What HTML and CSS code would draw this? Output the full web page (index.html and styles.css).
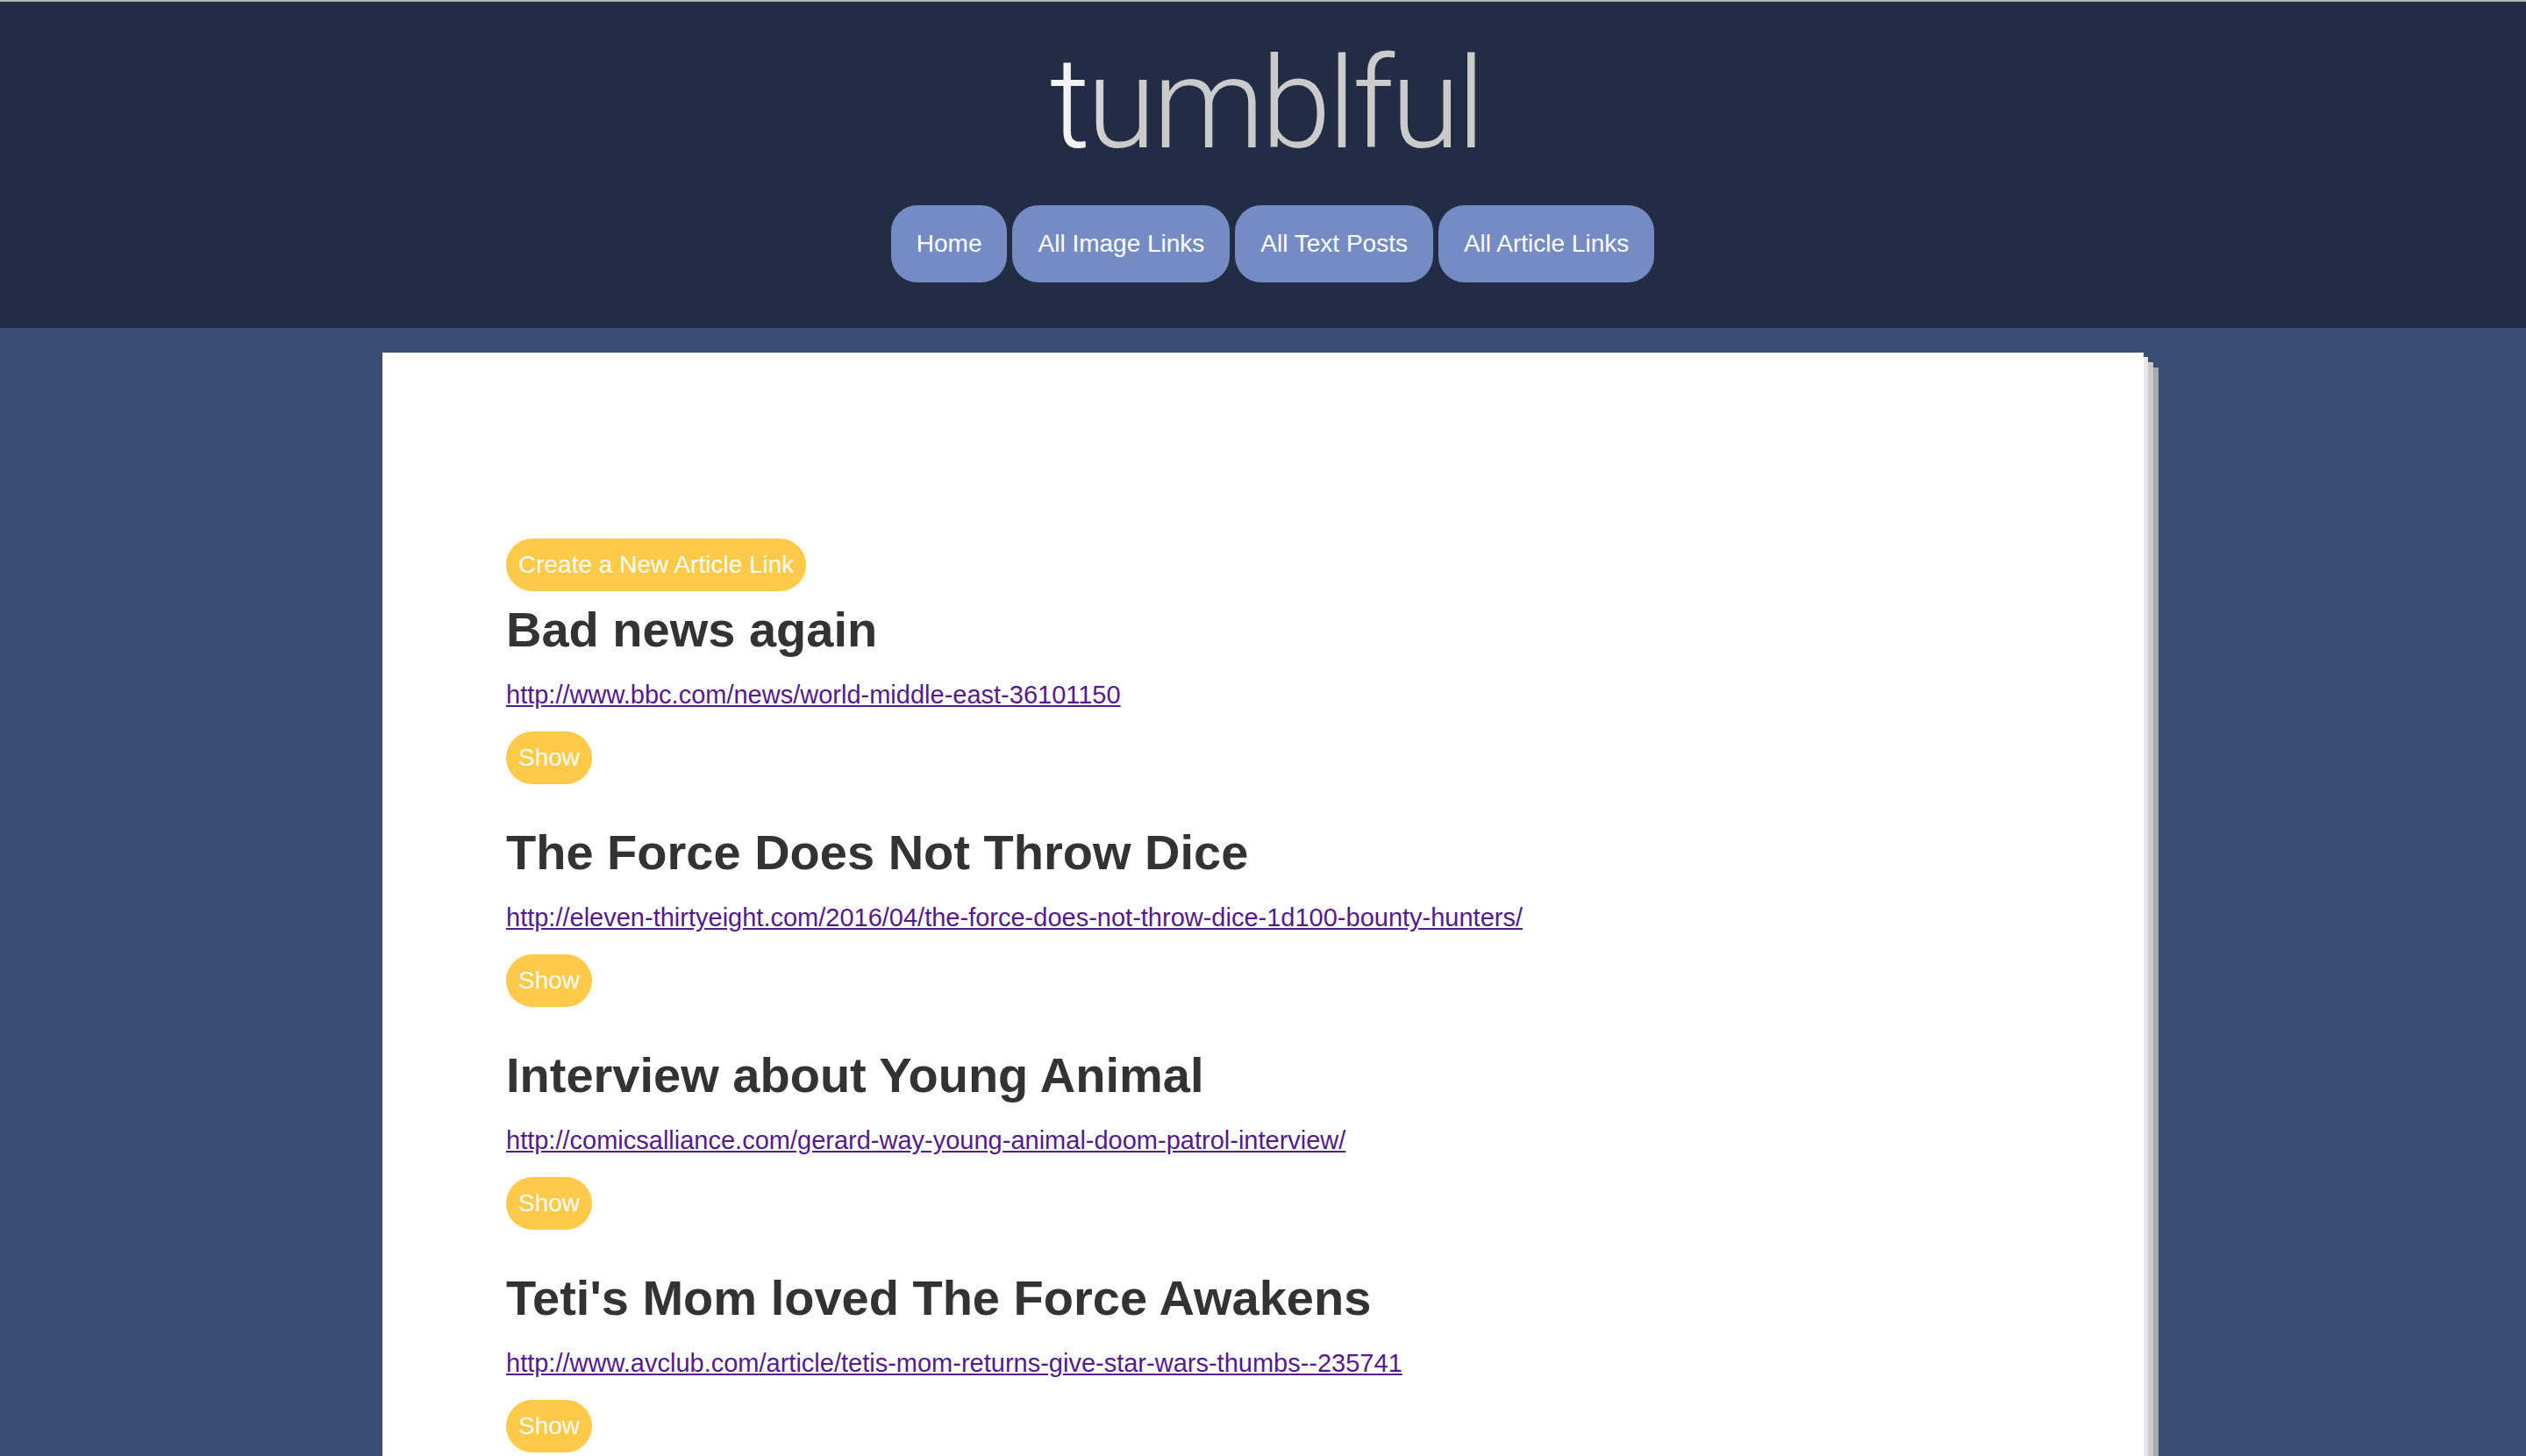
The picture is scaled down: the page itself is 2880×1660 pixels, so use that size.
FILE: index.html
```html
<!DOCTYPE html>
<html lang="en">
<head>
<meta charset="utf-8">
<title>tumblful</title>
<link rel="stylesheet" href="styles.css">
</head>
<body>
<header class="site-header">
  <h1 class="logo">tumblful</h1>
  <nav class="nav">
    <a class="nav-btn" href="#">Home</a>
    <a class="nav-btn" href="#">All Image Links</a>
    <a class="nav-btn" href="#">All Text Posts</a>
    <a class="nav-btn" href="#">All Article Links</a>
  </nav>
</header>
<main class="page">
  <section class="card">
    <a class="pill" href="#">Create a New Article Link</a>
    <article class="item">
      <h2 class="item-title">Bad news again</h2>
      <p class="item-link"><a href="#">http://www.bbc.com/news/world-middle-east-36101150</a></p>
      <a class="pill" href="#">Show</a>
    </article>
    <article class="item">
      <h2 class="item-title">The Force Does Not Throw Dice</h2>
      <p class="item-link"><a href="#">http://eleven-thirtyeight.com/2016/04/the-force-does-not-throw-dice-1d100-bounty-hunters/</a></p>
      <a class="pill" href="#">Show</a>
    </article>
    <article class="item">
      <h2 class="item-title">Interview about Young Animal</h2>
      <p class="item-link"><a href="#">http://comicsalliance.com/gerard-way-young-animal-doom-patrol-interview/</a></p>
      <a class="pill" href="#">Show</a>
    </article>
    <article class="item">
      <h2 class="item-title">Teti's Mom loved The Force Awakens</h2>
      <p class="item-link"><a href="#">http://www.avclub.com/article/tetis-mom-returns-give-star-wars-thumbs--235741</a></p>
      <a class="pill" href="#">Show</a>
    </article>
  </section>
</main>
</body>
</html>
```
FILE: styles.css
```css
html, body {
  margin: 0;
  padding: 0;
}
body {
  background: #3a4d75;
  font-family: "Liberation Sans", Arial, Helvetica, sans-serif;
  font-size: 28px;
  color: #333;
}
.site-header {
  background: #222d45;
  border-top: 2px solid #b4b4b4;
  height: 374px;
  box-sizing: border-box;
  padding-top: 37px;
  text-align: center;
}
.logo {
  margin: 0;
  font-family: Roboto, "Liberation Sans", sans-serif;
  font-weight: 300;
  font-size: 144px;
  line-height: 160px;
  letter-spacing: -4px;
  padding-left: 6px;
  display: inline-block;
  background: linear-gradient(90deg, #f6f6f6 0, #f2f2f2 8%, #cbcbcb 14%, #cbcbcb 100%);
  -webkit-background-clip: text;
  background-clip: text;
  color: transparent;
}
.nav {
  display: flex;
  justify-content: center;
  gap: 6px;
  margin-top: 35px;
  padding-left: 22px;
}
.nav-btn {
  display: block;
  background: #748bc4;
  color: #fff;
  text-decoration: none;
  font-size: 28px;
  line-height: 32px;
  padding: 28px 29px;
  border-radius: 30px;
}
.page {
  padding-top: 28px;
}
.card {
  width: 2008px;
  margin: 0 auto;
  background: #fff;
  box-sizing: border-box;
  padding: 212px 141px 40px;
  box-shadow: 5px 5px 0 #e9e9e9, 11px 11px 0 #cbcbcb, 17px 17px 0 #a9a9a9;
}
.pill {
  display: inline-block;
  background: #ffc94a;
  color: #fff;
  text-decoration: none;
  font-size: 28px;
  line-height: 32px;
  padding: 14px 14px;
  border-radius: 30px;
}
.item-title {
  margin: 12px 0 26px;
  font-size: 56px;
  font-weight: bold;
  line-height: 64px;
  color: #333;
}
.item + .item .item-title {
  margin-top: 46px;
}
.item-link {
  margin: 0 0 26px;
  font-size: 29px;
  line-height: 32px;
}
.item-link a {
  color: #551a8b;
}
```
